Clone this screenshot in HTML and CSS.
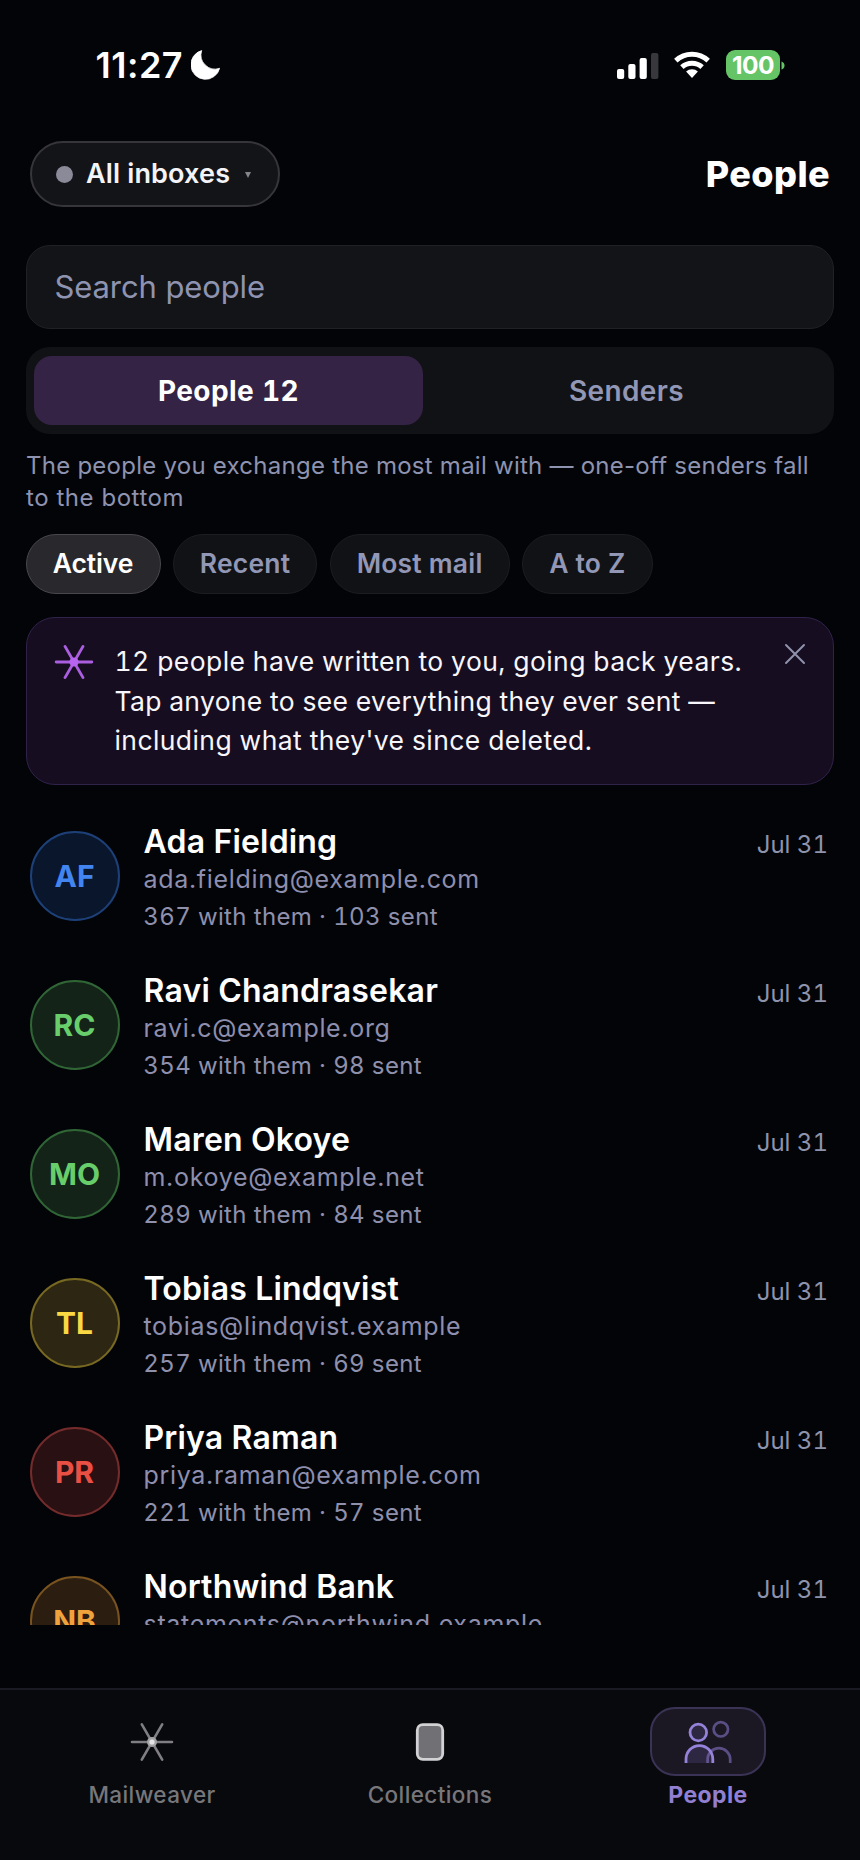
FILE: index.html
```html
<!DOCTYPE html>
<html lang="en">
<head>
<meta charset="utf-8">
<title>People</title>
<link rel="stylesheet" href="styles.css">
</head>
<body>
<div class="screen">
  <div class="status">
    <span class="clock">11:27</span>
    <svg class="moon" width="30" height="30" viewBox="0 0 30 30"><path d="M10.7.6A14.6 14.6 0 1 0 28.6 18.3 14.1 14.1 0 0 1 10.7.6Z" fill="#fff" stroke="#fff" stroke-width=".8" stroke-linejoin="round"/></svg>
    <div class="status-right">
      <svg class="signal" width="42" height="27" viewBox="0 0 42 27"><g fill="#fff"><rect x="0" y="17" width="7.2" height="10" rx="2"/><rect x="11.3" y="12" width="7.2" height="15" rx="2"/><rect x="22.6" y="6" width="7.2" height="21" rx="2"/></g><rect x="34" y="1" width="7.4" height="26" rx="2" fill="#38383c"/></svg>
      <svg class="wifi" width="36" height="28" viewBox="0 0 36 28"><g fill="none" stroke="#fff" stroke-width="5"><path d="M1.8 9.6A23.8 23.8 0 0 1 34.2 9.6"/><path d="M7.9 16.2A14.8 14.8 0 0 1 28.1 16.2"/></g><path d="M18 27 12.1 20.6A8.7 8.7 0 0 1 23.9 20.6Z" fill="#fff"/></svg>
      <div class="battery">100</div>
      <svg class="nub" width="4" height="9" viewBox="0 0 4 9"><path d="M.5.5Q3.5 1.5 3.5 4.5T.5 8.5Z" fill="#65c466"/></svg>
    </div>
  </div>

  <header class="header">
    <div class="inbox-pill"><i class="dot"></i><span>All inboxes</span><i class="caret"></i></div>
    <h1 class="title">People</h1>
  </header>

  <div class="search">Search people</div>

  <div class="segment">
    <div class="seg seg-on">People 12</div>
    <div class="seg">Senders</div>
  </div>

  <p class="desc"><span class="desc-first">The people you exchange the most mail with — one-off senders fall</span> <span class="desc-last">to the bottom</span></p>

  <div class="chips">
    <span class="chip chip-on">Active</span>
    <span class="chip chip-recent">Recent</span>
    <span class="chip chip-most">Most mail</span>
    <span class="chip chip-az">A to Z</span>
  </div>

  <section class="banner">
    <svg class="spark" width="42" height="42" viewBox="-21 -21 42 42"><g stroke="#ab5fe0" stroke-width="2.9" stroke-linecap="round"><path d="M-17.8 0H17.8M-9-15.6 9 15.6M9-15.6-9 15.6"/></g><circle r="4.6" fill="#b765f0"/></svg>
    <p class="banner-text"><span>12 people have written to you, going back years.</span><span class="line-dash">Tap anyone to see everything they ever sent —</span><span>including what they've since deleted.</span></p>
    <svg class="close" width="22" height="22" viewBox="0 0 22 22"><path d="M2 2 20 20M20 2 2 20" stroke="#9092ad" stroke-width="2" stroke-linecap="round"/></svg>
  </section>

  <main class="list">
    <article class="row"><div class="avatar blue">AF</div><div class="info"><b>Ada Fielding</b><span class="mail">ada.fielding@example.com</span><span class="stats">367 with them · 103 sent</span></div><time>Jul 31</time></article>
    <article class="row"><div class="avatar green">RC</div><div class="info"><b>Ravi Chandrasekar</b><span class="mail">ravi.c@example.org</span><span class="stats">354 with them · 98 sent</span></div><time>Jul 31</time></article>
    <article class="row"><div class="avatar green">MO</div><div class="info"><b>Maren Okoye</b><span class="mail">m.okoye@example.net</span><span class="stats">289 with them · 84 sent</span></div><time>Jul 31</time></article>
    <article class="row"><div class="avatar yellow">TL</div><div class="info"><b>Tobias Lindqvist</b><span class="mail">tobias@lindqvist.example</span><span class="stats">257 with them · 69 sent</span></div><time>Jul 31</time></article>
    <article class="row"><div class="avatar red">PR</div><div class="info"><b>Priya Raman</b><span class="mail">priya.raman@example.com</span><span class="stats">221 with them · 57 sent</span></div><time>Jul 31</time></article>
    <article class="row"><div class="avatar orange">NB</div><div class="info"><b>Northwind Bank</b><span class="mail">statements@northwind.example</span></div><time>Jul 31</time></article>
  </main>

  <nav class="tabs">
    <div class="tab">
      <div class="tab-icon"><svg width="46" height="42" viewBox="-23 -21 46 42"><g stroke="#7f7f83" stroke-width="2.6" stroke-linecap="round"><path d="M-20 0H20M-10.2-17.6 10.2 17.6M10.2-17.6-10.2 17.6"/></g><circle r="5" fill="#a3a3a6"/><circle r="2.6" fill="#e4e4e6"/></svg></div>
      <span>Mailweaver</span>
    </div>
    <div class="tab">
      <div class="tab-icon"><svg width="30" height="40" viewBox="0 0 30 40"><rect x="2.3" y="2.7" width="25.4" height="34.6" rx="5.5" fill="#717175" stroke="#d2d2d4" stroke-width="2.8"/></svg></div>
      <span>Collections</span>
    </div>
    <div class="tab tab-on">
      <div class="tab-icon"><svg width="52" height="46" viewBox="682 1718 52 46"><g fill="none" stroke="#5b4e85" stroke-width="2.7" stroke-linecap="butt"><circle cx="720.8" cy="1728.3" r="7.2"/><path d="M707.6 1762V1758.5A11.3 11.3 0 0 1 730.2 1758.5V1762"/></g><g fill="#9079d6" fill-opacity=".17" stroke="#9582d9" stroke-width="2.8" stroke-linecap="butt"><circle cx="698.3" cy="1731.5" r="8.3"/><path d="M686 1762V1758.3A13.4 13.8 0 0 1 712.8 1758.3V1762"/></g></svg></div>
      <span>People</span>
    </div>
  </nav>
</div>
</body>
</html>
```
FILE: styles.css
```css
* { box-sizing: border-box; }

body {
  margin: 0;
  background: #030408;
  color: #fff;
  font-family: Inter, "Liberation Sans", sans-serif;
  white-space: nowrap;
}

.screen {
  width: 860px;
  height: 1860px;
  overflow: hidden;
  display: flex;
  flex-direction: column;
}

/* status bar */
.status {
  height: 130px;
  padding: 0 75px 0 95.5px;
  display: flex;
  align-items: center;
  flex: none;
}
.clock { font-size: 36px; font-weight: 600; letter-spacing: 0.5px; }
.moon { margin-left: 7.5px; }
.status-right { margin-left: auto; display: flex; align-items: center; }
.wifi { margin-left: 15px; }
.battery {
  width: 54px;
  height: 30px;
  margin-left: 16px;
  border-radius: 9px;
  background: #65c466;
  font-size: 24.5px;
  font-weight: 700;
  line-height: 30px;
  letter-spacing: -0.5px;
  text-align: center;
}
.nub { margin-left: 1px; }

/* header */
.header {
  height: 66px;
  margin: 11px 30px 0 30px;
  display: flex;
  align-items: center;
  justify-content: space-between;
  flex: none;
}
.inbox-pill {
  width: 250px;
  height: 66px;
  padding-left: 23.5px;
  border: 2px solid #36363a;
  border-radius: 33px;
  background: #131418;
  display: flex;
  align-items: center;
  font-size: 27px;
  font-weight: 600;
  line-height: 60px;
  letter-spacing: 0.15px;
  color: #f4f4f8;
}
.dot { width: 17px; height: 17px; margin-right: 13.5px; border-radius: 50%; background: #8b8a99; }
.caret {
  margin: 2px 0 0 15px;
  border: 3.7px solid transparent;
  border-top: 6.5px solid #85858b;
  border-bottom: 0;
}
.title { margin: 0; font-size: 36px; font-weight: 800; line-height: 66px; letter-spacing: 0.4px; }

.search {
  height: 84px;
  margin: 38px 26px 0;
  padding-left: 27.5px;
  border: 1px solid #202125;
  border-radius: 24px;
  background: #131418;
  color: #8e93b0;
  font-size: 31px;
  line-height: 81px;
  letter-spacing: -0.1px;
  flex: none;
}

/* people / senders switch */
.segment {
  height: 87px;
  margin: 18px 26px 0;
  padding: 9px 8px;
  border-radius: 24px;
  background: #111216;
  display: flex;
  flex: none;
}
.seg {
  flex: 1;
  padding-left: 4px;
  font-size: 28px;
  font-weight: 600;
  line-height: 71px;
  letter-spacing: 0.4px;
  text-align: center;
  color: #9297b5;
}
.seg-on {
  flex: 0 0 389px;
  height: 69px;
  padding-left: 0;
  border-radius: 18px;
  background: #352346;
  color: #fff;
  font-weight: 700;
  font-variant-numeric: tabular-nums;
}

.desc { margin: 16px 26px 0; color: #8e93b0; font-size: 24px; line-height: 32px; flex: none; }
.desc span { display: block; }
.desc-first { letter-spacing: 0.25px; }
.desc-last { letter-spacing: 0.55px; }

/* sort chips */
.chips { margin: 20px 26px 0 25.5px; display: flex; gap: 12.3px; flex: none; }
.chip {
  height: 60px;
  border: 1px solid #1c1d21;
  border-radius: 30px;
  background: #111216;
  color: #9297b5;
  font-size: 26.5px;
  font-weight: 600;
  line-height: 57px;
  letter-spacing: 0.2px;
  text-align: center;
}
.chip-on { width: 135px; border-color: #48484c; background: #29292d; color: #fff; letter-spacing: -0.1px; }
.chip-recent { width: 144.5px; }
.chip-most { width: 180px; }
.chip-az { width: 131px; }

/* hint banner */
.banner {
  height: 168px;
  margin: 23px 26px 0;
  padding: 24px 27px 0 25.5px;
  border: 1px solid #30224b;
  border-radius: 29px;
  background: #160e20;
  display: flex;
  flex: none;
}
.spark { margin-top: -1px; }
.banner-text {
  margin: 0 auto 0 20px;
  font-size: 26.5px;
  line-height: 39.7px;
  letter-spacing: 0.41px;
  color: #f8f6fb;
  font-variant-numeric: tabular-nums;
}
.banner-text span { display: block; }
.banner-text .line-dash { letter-spacing: 0.32px; }
.close { margin-top: 1px; }

/* people list */
.list { height: 823px; margin: 17px 0 0; padding: 0 32px 0 30px; overflow: hidden; flex: none; }
.row { height: 149px; padding-top: 20px; display: flex; }
.avatar {
  width: 90px;
  height: 90px;
  margin: 9px 24px 0 0;
  border: 2px solid;
  border-radius: 50%;
  font-size: 30px;
  font-weight: 700;
  line-height: 86px;
  letter-spacing: 0;
  text-indent: -1px;
  text-align: center;
}
.blue { color: #4285f0; background: #09162b; border-color: #1d4078; }
.green { color: #68ce6b; background: #132318; border-color: #306536; }
.yellow { color: #fad843; background: #2c2612; border-color: #776822; }
.red { color: #ea4f43; background: #291012; border-color: #742b2b; }
.orange { color: #f0a33c; background: #2b1d10; border-color: #79531f; }
.info { display: flex; flex-direction: column; flex: 1; }
.info b { font-size: 32px; font-weight: 600; line-height: 40px; letter-spacing: 0.18px; margin-left: -0.5px; }
.mail { font-size: 25px; line-height: 35px; letter-spacing: 0.68px; color: #8e8fae; margin-left: -0.5px; }
.stats, time { font-variant-numeric: tabular-nums; font-size: 24px; color: #8f90ac; }
.stats { line-height: 37px; margin-top: 1px; letter-spacing: 0.37px; margin-left: -0.7px; }
time { line-height: 40px; margin-top: 2.5px; letter-spacing: 0; color: #8e93ac; }

/* tab bar */
.tabs {
  flex: 1;
  margin-top: 63px;
  padding: 17px 13px 0;
  border-top: 2px solid #191a23;
  background: #08090c;
  display: flex;
}
.tab { flex: 1; display: flex; flex-direction: column; align-items: center; font-size: 22.5px; font-weight: 500; line-height: 26px; letter-spacing: 0.4px; color: #77777b; }
.tab-icon { width: 116px; height: 69px; margin-bottom: 6px; border: 2px solid transparent; border-radius: 25px; display: flex; align-items: center; justify-content: center; }
.tab-on { font-size: 23px; font-weight: 700; letter-spacing: 0.4px; color: #917fd2; }
.tab-on .tab-icon { border-color: #3b3355; background: #1b1824; }
```
